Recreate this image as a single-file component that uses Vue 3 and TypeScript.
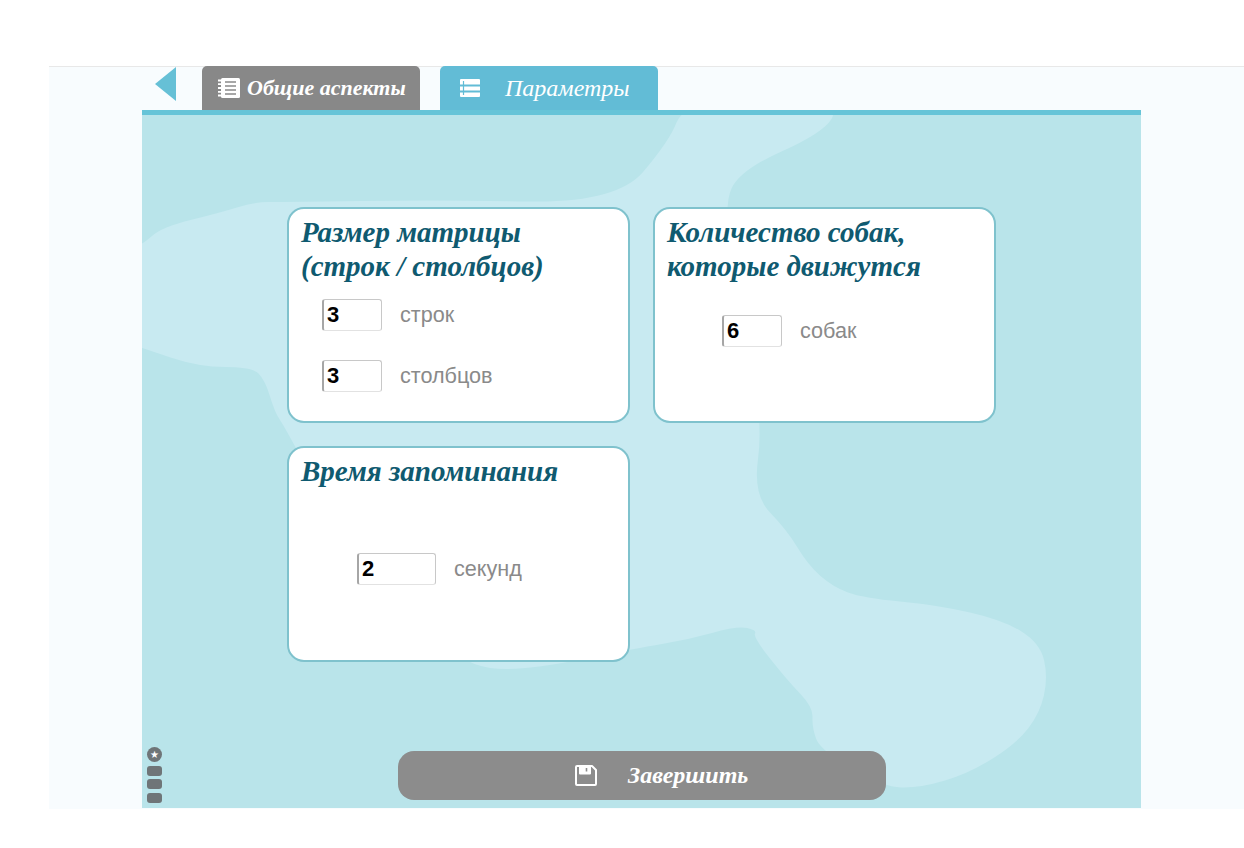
<script setup lang="ts">
interface Field { value: string; unit: string; wide?: boolean }
interface Card { title: string[]; cls: string; fields: Field[] }
const cards: Card[] = [
  { title: ['Размер матрицы', '(строк / столбцов)'], cls: 'matrix', fields: [{ value: '3', unit: 'строк' }, { value: '3', unit: 'столбцов' }] },
  { title: ['Количество собак,', 'которые движутся'], cls: 'dogs', fields: [{ value: '6', unit: 'собак' }] },
  { title: ['Время запоминания'], cls: 'time', fields: [{ value: '2', unit: 'секунд', wide: true }] },
]

// Outline of the pale decorative shape behind the cards, smoothed through midpoints.
const blob: [number, number][] = [
  [541, -5], [620, -5], [698, -5], [681, 23], [598, 60], [581, 97], [600, 200], [621, 313], [611, 385],
  [645, 420], [666, 455], [691, 477], [721, 488], [795, 495], [861, 510], [898, 533], [906, 567],
  [898, 603], [875, 633], [828, 663], [778, 678], [741, 677], [678, 640], [670, 617], [671, 597],
  [645, 570], [611, 527], [615, 520], [595, 516], [545, 530], [495, 538], [377, 562], [319, 554],
  [230, 480], [143, 317], [133, 303], [123, 270], [110, 257], [57, 257], [0, 238], [-10, 235],
  [-10, 135], [0, 135], [20, 117], [77, 103], [113, 92], [140, 92], [300, 90], [475, 93], [528, 30],
]
const mid = (a: [number, number], b: [number, number]) => `${(a[0] + b[0]) / 2} ${(a[1] + b[1]) / 2}`
const blobPath = blob
  .map((p, i) => {
    const next = blob[(i + 1) % blob.length]
    return `${i === 0 ? `M${mid(blob[blob.length - 1], p)}` : ''}Q${p[0]} ${p[1]} ${mid(p, next)}`
  })
  .join('') + 'Z'
</script>

<template>
  <div class="page">
    <div class="frame">
      <nav class="tabs">
        <span class="back"></span>
        <div class="tab grey">
          <svg width="24" height="22" viewBox="0 0 24 22" fill="none" stroke="#fff">
            <rect x="4" y="1" width="19" height="20" rx="1.5" fill="#fff" stroke="none" />
            <path d="M8 5h11M8 9h11M8 13h11M8 17h11" stroke="#8a8a8a" stroke-width="1.7" />
            <path d="M1 3.5h4M1 7.2h4M1 11h4M1 14.8h4M1 18.5h4" stroke-width="1.8" />
          </svg>
          <span>Общие аспекты</span>
        </div>
        <div class="tab blue">
          <svg width="22" height="20" viewBox="0 0 22 20">
            <rect x="1" y="1" width="20" height="18" rx="1" fill="#fff" />
            <path d="M1 7.5h20M1 13.5h20" stroke="#62bcd6" stroke-width="2" />
            <path d="M4.5 3v14" stroke="#62bcd6" stroke-width="1.2" />
          </svg>
          <span>Параметры</span>
        </div>
      </nav>
      <main class="panel">
        <svg class="bg" viewBox="0 5 999 693" preserveAspectRatio="none">
          <path fill="#c8eaf1" :d="blobPath" />
        </svg>
        <div class="grid">
          <section v-for="card in cards" :key="card.cls" class="card" :class="card.cls">
            <h2><span v-for="line in card.title" :key="line">{{ line }}</span></h2>
            <div class="fields">
              <label v-for="f in card.fields" :key="f.unit" class="field">
                <input :class="{ wide: f.wide }" :value="f.value" />
                <span>{{ f.unit }}</span>
              </label>
            </div>
          </section>
        </div>
        <div class="footer">
          <button class="finish" type="button">
            <svg width="24" height="23" viewBox="0 0 24 23" fill="none" stroke="#fff" stroke-width="2" stroke-linejoin="round">
              <path d="M2 3a1 1 0 0 1 1-1h15l4 4v14a1 1 0 0 1-1 1H3a1 1 0 0 1-1-1z" />
              <path d="M6 2.5v7h10v-7" fill="#fff" />
              <path d="M12.5 4v3.5" stroke="#8c8c8c" stroke-width="1.6" />
            </svg>
            <span>Завершить</span>
          </button>
        </div>
        <aside class="side">
          <span class="round">★</span>
          <span class="pill"></span>
          <span class="pill"></span>
          <span class="pill"></span>
        </aside>
      </main>
    </div>
  </div>
</template>

<style scoped>
.page {
  width: 1244px;
  height: 848px;
  padding: 66px 0 40px 49px;
  box-sizing: border-box;
  background: #fff;
  overflow: hidden;
}
.frame {
  height: 742px;
  background: #f8fcfe;
  border-top: 1px solid #e8e8e8;
  padding-left: 93px;
  display: flex;
  flex-direction: column;
}
.tabs {
  height: 43px;
  flex: none;
  display: flex;
  align-items: flex-end;
  position: relative;
  padding-left: 60px;
  gap: 20px;
}
.back {
  position: absolute;
  left: 13px;
  top: 0;
  width: 0;
  height: 0;
  border-top: 17.5px solid transparent;
  border-bottom: 17.5px solid transparent;
  border-right: 21px solid #66c0d6;
}
.tab {
  width: 218px;
  height: 44px;
  box-sizing: border-box;
  border-radius: 5px 5px 0 0;
  display: flex;
  align-items: center;
  color: #fff;
  font-family: "Liberation Serif", serif;
  font-style: italic;
}
.grey {
  background: #888;
  padding-left: 15px;
  gap: 6px;
  font-size: 22px;
  font-weight: 700;
}
.blue {
  background: #62bcd6;
  padding-left: 19px;
  gap: 24px;
  font-size: 24px;
}
.panel {
  position: relative;
  width: 999px;
  height: 698px;
  flex: none;
  box-sizing: border-box;
  border-top: 5px solid #66c4d8;
  background: #b9e4ea;
  padding: 92px 0 0 145px;
  overflow: hidden;
}
.bg {
  position: absolute;
  left: 0;
  top: 0;
  width: 100%;
  height: 100%;
}
.grid {
  position: relative;
  display: grid;
  grid-template-columns: 343px 343px;
  grid-auto-rows: 216px;
  gap: 23px;
}
.card {
  box-sizing: border-box;
  background: #fff;
  border: 2px solid #7fc2cd;
  border-radius: 17px;
  padding: 6px 12px;
}
h2 {
  margin: 0;
  font-family: "Liberation Serif", serif;
  font-style: italic;
  font-weight: 700;
  font-size: 29px;
  line-height: 34px;
  color: #0f5a70;
  display: flex;
  flex-direction: column;
}
.fields {
  display: flex;
  flex-direction: column;
  gap: 29px;
}
.field {
  display: flex;
  align-items: center;
  gap: 18px;
  font-family: "Liberation Sans", Arial, sans-serif;
  font-size: 21.6px;
  color: #8a8a8a;
}
input {
  width: 60px;
  height: 32px;
  box-sizing: border-box;
  border: 1px solid #c8c8c8;
  border-bottom-color: #e2e2e2;
  border-left: 2px solid #a6a6a6;
  border-radius: 3px;
  padding: 0 3px;
  background: #fff;
  font-family: "Liberation Sans", Arial, sans-serif;
  font-size: 22px;
  font-weight: 700;
  color: #000;
  outline: none;
}
input.wide {
  width: 79px;
}
.matrix .fields {
  padding: 16px 0 0 21px;
}
.dogs .fields {
  padding: 32px 0 0 55px;
}
.time .fields {
  padding: 65px 0 0 56px;
}
.footer {
  position: relative;
  margin-top: 89px;
  padding-left: 111px;
}
.finish {
  width: 488px;
  height: 49px;
  border: 0;
  border-radius: 16px;
  background: #8c8c8c;
  color: #fff;
  display: flex;
  align-items: center;
  padding: 0 0 0 176px;
  gap: 30px;
  font-family: "Liberation Serif", serif;
  font-style: italic;
  font-weight: 700;
  font-size: 24px;
}
.side {
  position: absolute;
  left: 5px;
  top: 632px;
  display: flex;
  flex-direction: column;
  gap: 3.5px;
}
.round {
  width: 15px;
  height: 15px;
  border-radius: 50%;
  background: #6f7578;
  color: #fff;
  font-size: 10px;
  line-height: 15px;
  text-align: center;
  font-family: "DejaVu Sans", sans-serif;
}
.pill {
  width: 15px;
  height: 10px;
  border-radius: 3px;
  background: #6f7578;
}
</style>
